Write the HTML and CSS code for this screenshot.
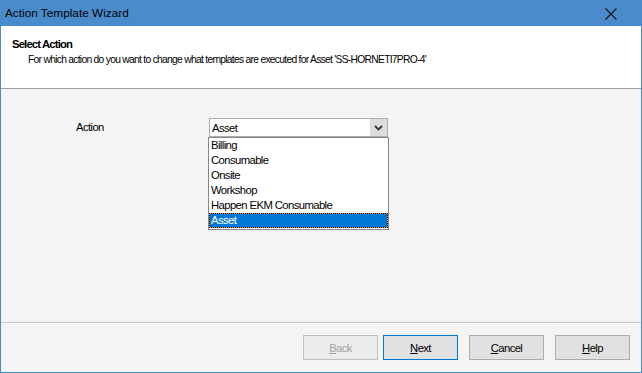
FILE: index.html
```html
<!DOCTYPE html>
<html lang="en">
<head>
  <meta charset="UTF-8" />
  <title>Action Template Wizard</title>
  <link rel="stylesheet" href="styles.css">
</head>
<body>
  <div class="wizard">
    <div class="titlebar">
      <span class="title">Action Template Wizard</span>
      <svg class="close-x" width="12" height="12" viewBox="0 0 12 12">
        <path d="M0.5 0.5 L11.5 11.5 M11.5 0.5 L0.5 11.5" stroke="#111" stroke-width="1.1" fill="none"/>
      </svg>
    </div>

    <div class="header">
      <div class="header-title">Select Action</div>
      <div class="header-sub">For which action do you want to change what templates are executed for Asset 'SS-HORNETI7PRO-4'</div>
    </div>

    <div class="content">
      <div class="field-row">
        <label class="field-label">Action</label>
        <div class="combo-wrap">
          <div class="combo">
            <span class="combo-value">Asset</span>
            <span class="combo-btn">
              <svg width="9" height="6" viewBox="0 0 9 6"><path d="M1 1 L4.5 4.5 L8 1" stroke="#333" stroke-width="1.8" fill="none"/></svg>
            </span>
          </div>
          <ul class="combo-list">
            <li>Billing</li>
            <li>Consumable</li>
            <li>Onsite</li>
            <li>Workshop</li>
            <li>Happen EKM Consumable</li>
            <li class="sel">Asset</li>
          </ul>
        </div>
      </div>
    </div>

    <div class="footer">
      <button class="btn" disabled><u>B</u>ack</button>
      <button class="btn btn-default"><u>N</u>ext</button>
      <button class="btn btn-gap"><u>C</u>ancel</button>
      <button class="btn btn-gap"><u>H</u>elp</button>
    </div>
  </div>
</body>
</html>
```

FILE: styles.css
```css
html, body {
  margin: 0;
  padding: 0;
  font-family: 'Liberation Sans', Arial, sans-serif;
  font-size: 11.3px;
  letter-spacing: -0.6px;
  color: #000;
}
.wizard {
  width: 642px;
  height: 373px;
  box-sizing: border-box;
  border: 1px solid #4a8ccb;
  border-top: none;
  display: flex;
  flex-direction: column;
  background: #f4f4f4;
}
.titlebar {
  height: 26px;
  margin: 0 -1px;
  background: #4a8ccb;
  display: flex;
  align-items: center;
  padding: 0 0 0 5px;
  flex-shrink: 0;
}
.title {
  font-size: 11.8px;
  letter-spacing: 0;
  color: #000;
  flex: 1;
}
.close-x {
  margin-right: 25px;
  margin-top: 1px;
}
/* -- HEADER -- */
.header {
  background: #fff;
  height: 63px;
  box-sizing: border-box;
  border-bottom: 1px solid #a0a0a0;
  padding: 11px 0 0 11px;
  flex-shrink: 0;
}
.header-title {
  font-weight: bold;
  font-size: 11.3px;
  letter-spacing: -0.85px;
  line-height: 15px;
}
.header-sub {
  font-size: 10.3px;
  letter-spacing: -0.72px;
  line-height: 15px;
  margin-left: 16px;
}
/* -- CONTENT -- */
.content {
  flex: 1;
  padding: 29px 0 0 75px;
}
.field-row {
  display: flex;
  align-items: flex-start;
}
.field-label {
  width: 133px;
  padding-top: 3px;
}
.combo-wrap {
  position: relative;
}
.combo {
  width: 179px;
  height: 19px;
  box-sizing: border-box;
  border: 1px solid #acacac;
  background: #fff;
  display: flex;
  align-items: center;
}
.combo-value {
  flex: 1;
  padding-left: 2px;
}
.combo-btn {
  width: 17px;
  height: 17px;
  background: #dcdcdc;
  display: flex;
  align-items: center;
  justify-content: center;
}
.combo-list {
  position: absolute;
  top: 19px;
  left: -1px;
  width: 181px;
  box-sizing: border-box;
  margin: 0;
  padding: 0 0 1px 0;
  list-style: none;
  background: #fff;
  border: 1px solid #828790;
  z-index: 10;
}
.combo-list li {
  height: 15px;
  line-height: 13px;
  padding-left: 1px;
  box-sizing: border-box;
  border: 1px solid transparent;
}
.combo-list li.sel {
  color: #fff;
  border: 1px dotted #000;
  background: linear-gradient(#0078d7, #0078d7) padding-box, #e08a28 border-box;
}
/* -- FOOTER -- */
.footer {
  height: 50px;
  box-sizing: border-box;
  border-top: 1px solid #c8c8c8;
  display: flex;
  align-items: flex-start;
  padding: 12px 0 0 302px;
  gap: 5px;
  flex-shrink: 0;
}
.btn {
  width: 75px;
  height: 25px;
  font-family: inherit;
  font-size: 11.3px;
  letter-spacing: -0.6px;
  background: #e1e1e1;
  border: 1px solid #adadad;
  color: #000;
  padding: 0;
}
.btn:disabled {
  background: #ececec;
  border-color: #bfbfbf;
  color: #a0a0a0;
}
.btn-default {
  border-color: #0078d7;
}
.btn-gap {
  margin-left: 6px;
}
```
